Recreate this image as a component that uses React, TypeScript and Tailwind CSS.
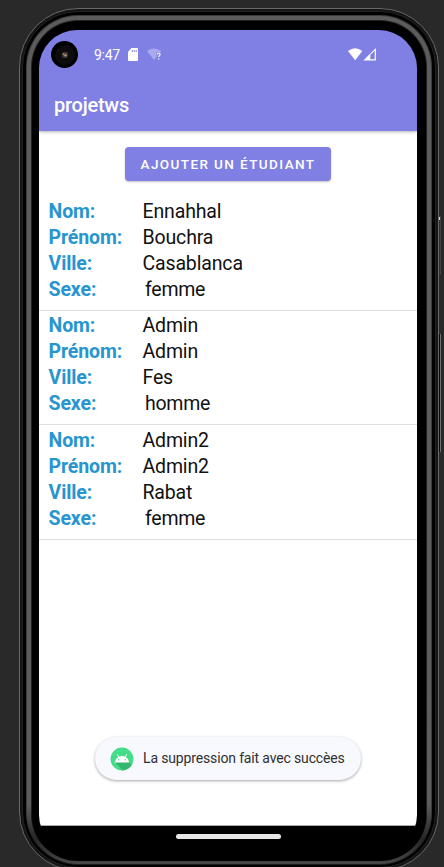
type Student = { nom: string; prenom: string; ville: string; sexe: string };

const students: Student[] = [
  { nom: "Ennahhal", prenom: "Bouchra", ville: "Casablanca", sexe: "femme" },
  { nom: "Admin", prenom: "Admin", ville: "Fes", sexe: "homme" },
  { nom: "Admin2", prenom: "Admin2", ville: "Rabat", sexe: "femme" },
];

function Field({ label, value, indent }: { label: string; value: string; indent?: boolean }) {
  return (
    <div className="flex h-[26px] items-center text-[19.5px] leading-[26px]">
      <span className="w-[94px] font-bold tracking-[-0.1px] text-[#2795cf]">{label}</span>
      <span className={indent ? "pl-[2.5px] text-[#111] tracking-[-0.25px]" : "text-[#111] tracking-[-0.15px]"}>{value}</span>
    </div>
  );
}

function StudentRow({ s }: { s: Student }) {
  return (
    <li className="h-[114.5px] border-b border-[#dfdfdf] pl-[9.5px] pt-[2.75px]">
      <Field label="Nom:" value={s.nom} />
      <Field label="Prénom:" value={s.prenom} />
      <Field label="Ville:" value={s.ville} />
      <Field label="Sexe:" value={s.sexe} indent />
    </li>
  );
}

function StatusBar() {
  return (
    <div className="flex h-[49px] items-center pl-3 text-white">
      <div className="flex size-[27px] items-center justify-center rounded-full bg-black">
        <div className="flex size-[20px] items-center justify-center rounded-full bg-[#0c0c0c]">
          <svg width="8" height="8" viewBox="0 0 8 8">
            <circle cx="4" cy="4" r="3.3" fill="#39312d" />
            <circle cx="2.7" cy="3.2" r="1" fill="#a28c7c" />
            <circle cx="4.5" cy="4.5" r="1.1" fill="#e0b48f" />
            <circle cx="5.3" cy="2.5" r=".7" fill="#756255" />
          </svg>
        </div>
      </div>
      <span className="ml-[16px] w-[27px] whitespace-nowrap text-[14px] leading-none tracking-[-0.3px]">9:47</span>
      <svg className="ml-[7px]" width="10" height="13" viewBox="0 0 10 13">
        <path d="M3.5 0H9Q10 0 10 1V12Q10 13 9 13H1Q0 13 0 12V4Z" fill="white" />
        <path d="M4.2 2v2M6.2 2v2M8.2 2v2" stroke="#8080e4" strokeWidth="1" />
      </svg>
      <svg className="ml-[9px]" width="16" height="13" viewBox="0 0 16 13">
        <path d="M0 3Q7 -2 14 3V4H9.5V9L7 12Z" fill="#a9a9ef" />
        <path d="M10.3 6.4Q10.5 5 11.7 5Q13.1 5 13.1 6.3Q13.1 7 12.3 7.7Q11.7 8.2 11.7 9M11.7 10.2V11.5" stroke="white" strokeWidth="1.1" fill="none" />
      </svg>
      <svg className="ml-[184.5px]" width="29" height="13" viewBox="0 0 29 13">
        <path d="M0 3Q7 -2.4 14.3 3L7.2 12.2Z" fill="white" />
        <path d="M15.3 12.6L27.9 0V12.6Z" fill="white" />
        <path d="M22.3 6.8L26.7 2.8V11.3H22.3Z" fill="#8080e4" />
      </svg>
    </div>
  );
}

function AndroidIcon() {
  return (
    <svg width="24" height="24" viewBox="0 0 24 24">
      <defs>
        <clipPath id="disc"><circle cx="12" cy="12" r="11.4" /></clipPath>
      </defs>
      <g clipPath="url(#disc)">
        <rect width="24" height="24" fill="#3ddb84" />
        <path d="M4 0V24M8 0V24M12 0V24M16 0V24M20 0V24M0 4H24M0 8H24M0 12H24M0 16H24M0 20H24" stroke="#68e3a0" strokeWidth=".4" />
        <path d="M5 15.2L13 24H24V20L18.6 14.5Z" fill="#32b76f" />
      </g>
      <path d="M4.8 15.4Q5.2 11.6 8.2 9.9L6.8 7.5L7.4 7.1L8.9 9.5Q12 8.3 15.1 9.5L16.6 7.1L17.2 7.5L15.8 9.9Q18.8 11.6 19.2 15.4Z" fill="white" />
      <circle cx="8.7" cy="12.8" r=".7" fill="#3ddb84" />
      <circle cx="15.3" cy="12.8" r=".7" fill="#3ddb84" />
    </svg>
  );
}

export default function App() {
  return (
    <div className="relative h-[867px] w-[444px] overflow-hidden bg-[#292929] pl-[19px] pt-[8px] font-['Roboto','Noto_Sans',sans-serif]">
      {/* Side buttons protruding past the frame */}
      <div className="absolute left-[436px] top-[215px] h-[60px] w-[5px] rounded-r-[2px] border-r border-[#444] bg-[#303030]">
        <div className="ml-[2px] mt-[2px] h-[3px] w-[2px] bg-[#d8d8d8]" />
      </div>
      <div className="absolute left-[436px] top-[333px] h-[120px] w-[5px] rounded-r-[2px] border-r border-[#707070] bg-[#080808]" />

      {/* Phone frame, from the outer rim inwards */}
      <div className="relative h-[863px] w-[420px] rounded-[59px] border border-[#686868] bg-[#151515] p-[2px]">
        <div className="h-full rounded-[56px] border border-[#222] bg-black px-[3px] pb-[2px] pt-[3px]">
          <div className="h-full rounded-[52px] bg-linear-to-b from-[#3c3c3c] from-94% to-[#1c1c1c] to-98% p-px">
            <div className="h-full rounded-[51px] bg-linear-to-b from-[#5c5c5c] from-93% via-[#262626] via-97% to-[#484848] px-[4px] pb-[3px] pt-[4px]">
              <div className="h-full rounded-[47px] bg-linear-to-b from-[#202020] from-94% to-black to-98% p-px">
                <div className="h-full rounded-[46px] bg-black pl-[7px] pr-[9px] pt-[9px]">
                  <main className="flex h-[823px] w-[378px] flex-col overflow-hidden rounded-[38px] bg-black">
                    <header className="z-10 h-[101px] shrink-0 bg-[#8080e4] shadow-[0_1px_3px_rgba(0,0,0,0.3)]">
                      <StatusBar />
                      <h1 className="pl-[15px] pt-[12px] text-[20px] font-medium leading-[28px] tracking-[-0.25px] text-white">projetws</h1>
                    </header>
                    <section className="flex min-h-0 flex-1 flex-col bg-white">
                      <div className="flex h-[65px] shrink-0 justify-center pt-[16px]">
                        <button className="h-[34px] w-[206px] whitespace-nowrap rounded-[4px] bg-[#8080e4] text-[13.5px] font-medium tracking-[1.4px] text-white shadow-[0_1px_2px_rgba(0,0,0,0.25)]">
                          AJOUTER UN ÉTUDIANT
                        </button>
                      </div>
                      <ul>
                        {students.map((s) => (
                          <StudentRow key={s.nom} s={s} />
                        ))}
                      </ul>
                      <div className="flex flex-1 items-end justify-center pb-[45px]">
                        <div className="flex h-[43px] w-[266px] items-center rounded-full bg-[#f7f9fe] pl-[15px] shadow-[0_1px_3px_rgba(0,0,0,0.35)]">
                          <AndroidIcon />
                          <span className="ml-[9px] whitespace-nowrap text-[14px] tracking-[-0.15px] text-[#303030]">La suppression fait avec succèes</span>
                        </div>
                      </div>
                    </section>
                    <nav className="flex h-[28px] shrink-0 justify-center border-t border-[#aaa] bg-black pt-[8px]">
                      <div className="h-[5px] w-[105px] rounded-full bg-[#e7e7e7]" />
                    </nav>
                  </main>
                </div>
              </div>
            </div>
          </div>
        </div>
      </div>
    </div>
  );
}
